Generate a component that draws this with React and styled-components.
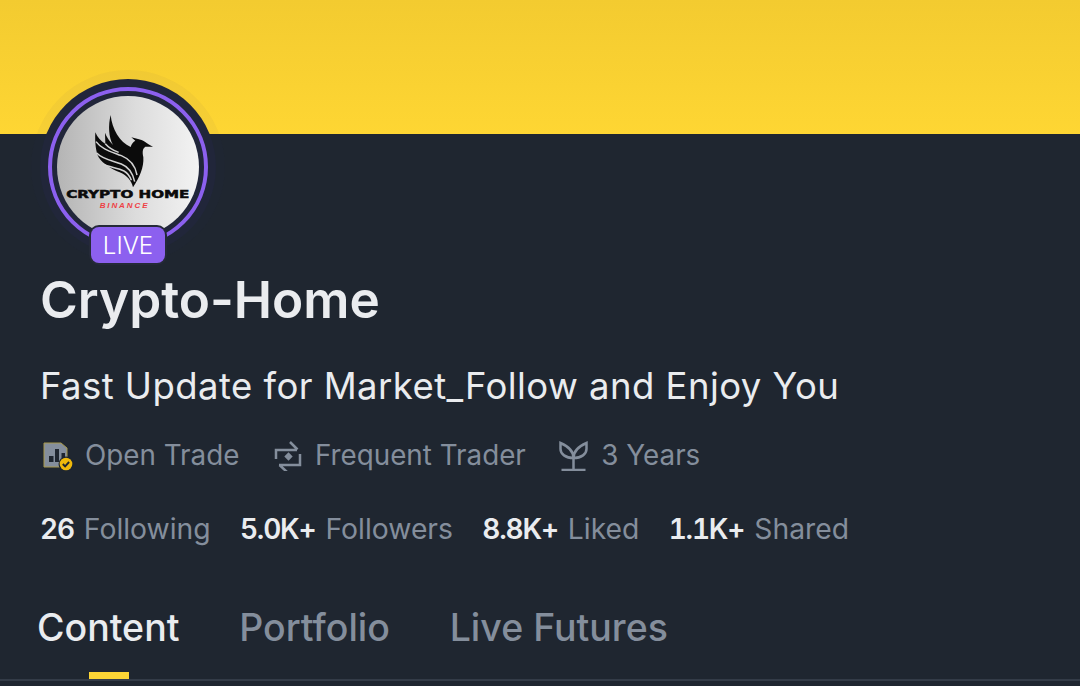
import React from 'react';
import styled, { createGlobalStyle } from 'styled-components';

const GlobalStyle = createGlobalStyle`
  html, body { margin: 0; padding: 0; background: #1f2630; }
  body { font-family: Inter, "Liberation Sans", sans-serif; overflow: hidden; }
`;

const Page = styled.div`
  width: 1080px;
  height: 686px;
  overflow: hidden;
  display: flex;
  flex-direction: column;
  background: #1f2630;
`;

const Banner = styled.div`
  height: 134px;
  flex: none;
  background: linear-gradient(180deg, #f3cb30 0%, #fed633 100%);
`;

const Profile = styled.div`
  display: flex;
  flex-direction: column;
  padding: 0 40px;
  flex: 1;
`;

const AvatarWrap = styled.div`
  position: relative;
  width: 176px;
  height: 176px;
  margin-top: -55px;
  border-radius: 50%;
  background: #21263a;
  display: flex;
  align-items: center;
  justify-content: center;
  box-shadow: 0 0 0 9px rgba(50, 50, 90, 0.04);
  flex: none;
`;

const AvatarRing = styled.div`
  width: 160px;
  height: 160px;
  box-sizing: border-box;
  border-radius: 50%;
  border: 4px solid #8c60ef;
  padding: 5px;
`;

const AvatarImage = styled.div`
  width: 100%;
  height: 100%;
  border-radius: 50%;
  background: linear-gradient(90deg, #b4b4b4 0%, #dcdcdc 55%, #f3f3f3 100%);
  display: flex;
  flex-direction: column;
  align-items: center;
  padding-top: 13px;
  box-sizing: border-box;
`;

const LogoMark = styled.svg`
  flex: none;
  margin: 0 8px -5px 0;
`;

const LogoName = styled.div`
  font-family: "DejaVu Sans", sans-serif;
  font-weight: 700;
  font-size: 10.5px;
  line-height: 12px;
  color: #0b0b0b;
  white-space: nowrap;
  -webkit-text-stroke: 0.5px #0b0b0b;
  transform: scaleX(1.44);
`;

const LogoSub = styled.div`
  font-family: "Liberation Sans", sans-serif;
  font-style: italic;
  font-weight: 700;
  font-size: 8px;
  line-height: 9px;
  letter-spacing: 1.9px;
  color: #ee3f45;
  margin: 1px 0 0 -7px;
`;

const LiveBadge = styled.div`
  position: absolute;
  left: 51px;
  bottom: -8px;
  width: 74px;
  height: 36px;
  box-sizing: border-box;
  border-radius: 8px;
  background: #8c60ef;
  color: #fff;
  font-size: 24px;
  font-weight: 300;
  display: flex;
  align-items: center;
  justify-content: center;
  box-shadow: 0 0 0 2px #252a38;
`;

const Name = styled.h1`
  margin: 14px 0 0;
  font-size: 51.3px;
  line-height: 60px;
  font-weight: 600;
  color: #eaecef;
  white-space: nowrap;
`;

const Bio = styled.p`
  margin: 35px 0 0;
  font-size: 36.5px;
  line-height: 44px;
  letter-spacing: 0.45px;
  font-weight: 400;
  color: #eaecef;
  white-space: nowrap;
`;

const Meta = styled.div`
  display: flex;
  align-items: center;
  gap: 31.5px;
  margin: 29px 0 0 1px;
`;

const MetaItem = styled.div`
  display: flex;
  align-items: center;
  gap: 12px;
  font-size: 27.8px;
  line-height: 36px;
  color: #848e9c;
  white-space: nowrap;
`;

const Stats = styled.div`
  display: flex;
  align-items: center;
  gap: 29.3px;
  margin-top: 38px;
`;

const Stat = styled.div`
  display: flex;
  gap: 10px;
  font-size: 28.3px;
  line-height: 36px;
  color: #848e9c;
  white-space: nowrap;
  b {
    font-size: 28px;
    font-weight: 600;
    font-variant-numeric: tabular-nums;
    letter-spacing: -1.2px;
    color: #eaecef;
  }
`;

const Tabs = styled.div`
  display: flex;
  gap: 59.7px;
  margin: 52px 0 0 -40px;
  width: 1080px;
  padding-left: 37px;
  box-sizing: border-box;
  height: 82px;
  border-bottom: 2px solid #333b47;
  flex: none;
`;

const Tab = styled.div`
  position: relative;
  font-size: 37.5px;
  line-height: 46px;
  font-weight: 500;
  color: ${p => (p.$active ? '#eaecef' : '#848e9c')};
  white-space: nowrap;
  height: 80px;
  padding-top: 6px;
  box-sizing: border-box;
  &::after {
    content: '';
    display: ${p => (p.$active ? 'block' : 'none')};
    position: absolute;
    left: 52px;
    bottom: 0;
    width: 40px;
    height: 7px;
    background: #fcd535;
  }
`;

const Phoenix = () => (
  <LogoMark width="72" height="84" viewBox="0 0 216 252">
    <path fill="#0b0b0b" d="M68 18C72 60 95 100 128 114C130 105 136 98 142 95L130 85L150 90C165 92 175 103 195 113L172 113C165 118 162 125 166 145C168 175 155 205 135 235C130 215 118 200 95 190C70 180 45 165 32 145C24 130 20 100 22 70C28 85 38 95 52 105L51 71C56 85 64 95 75 108C62 85 60 50 68 18z" />
    <path fill="none" stroke="#d2d2d2" strokeWidth="4.500" d="M24 98C40 120 70 128 100 140C125 150 142 170 147 198M26 132C45 152 75 155 100 165C120 173 134 190 140 218M44 165C65 175 90 176 108 186C118 192 126 202 130 214M52 104C62 116 76 124 92 130" />
  </LogoMark>
);

const OpenTradeIcon = () => (
  <svg width="32" height="32" viewBox="1 1 32 32">
    <path fill="#848e9c" stroke="#a8984a" strokeWidth="1" d="M4 5H21L27 10V29H4z" />
    <path fill="#1f2630" d="M9 18h4.500v6H9zM15 11h4v13h-4zM21.500 15h3.500v5h-3.500z" />
    <circle cx="26" cy="26" r="7.500" fill="#1f2630" />
    <circle cx="26" cy="26" r="6.300" fill="#f0b90b" />
    <path fill="none" stroke="#1f2630" strokeWidth="1.900" d="M22.800 26l2.300 2.300 4-4.300" />
  </svg>
);

const SwapIcon = () => (
  <svg width="32" height="32" viewBox="1 1 32 32" fill="none" stroke="#848e9c" strokeWidth="2.500">
    <path d="M6 21V12H27M20 4L27.500 11.500M30 16V27H9M9.500 27L17 34" />
    <path fill="#848e9c" stroke="none" d="M18.500 14.300L22.700 18.500L18.500 22.700L14.300 18.500z" />
  </svg>
);

const SproutIcon = () => (
  <svg width="32" height="32" viewBox="1.5 1 32 32" fill="none" stroke="#848e9c" strokeWidth="2.500">
    <path d="M6 32H30M18 32V20M18 20C18 12 12 8 5 5V11C5 16 10 20 18 20zM18 20C18 12 24 8 31 5V11C31 16 26 20 18 20z" />
  </svg>
);

const App = () => (
  <>
    <GlobalStyle />
    <Page>
      <Banner />
      <Profile>
        <AvatarWrap>
          <AvatarRing>
            <AvatarImage>
              <Phoenix />
              <LogoName>CRYPTO HOME</LogoName>
              <LogoSub>BINANCE</LogoSub>
            </AvatarImage>
          </AvatarRing>
          <LiveBadge>LIVE</LiveBadge>
        </AvatarWrap>
        <Name>Crypto-Home</Name>
        <Bio>Fast Update for Market_Follow and Enjoy You</Bio>
        <Meta>
          <MetaItem><OpenTradeIcon />Open Trade</MetaItem>
          <MetaItem><SwapIcon />Frequent Trader</MetaItem>
          <MetaItem><SproutIcon />3 Years</MetaItem>
        </Meta>
        <Stats>
          <Stat><b>26</b>Following</Stat>
          <Stat><b>5.0K+</b>Followers</Stat>
          <Stat><b>8.8K+</b>Liked</Stat>
          <Stat><b>1.1K+</b>Shared</Stat>
        </Stats>
        <Tabs>
          <Tab $active>Content</Tab>
          <Tab>Portfolio</Tab>
          <Tab>Live Futures</Tab>
        </Tabs>
      </Profile>
    </Page>
  </>
);

export default App;
